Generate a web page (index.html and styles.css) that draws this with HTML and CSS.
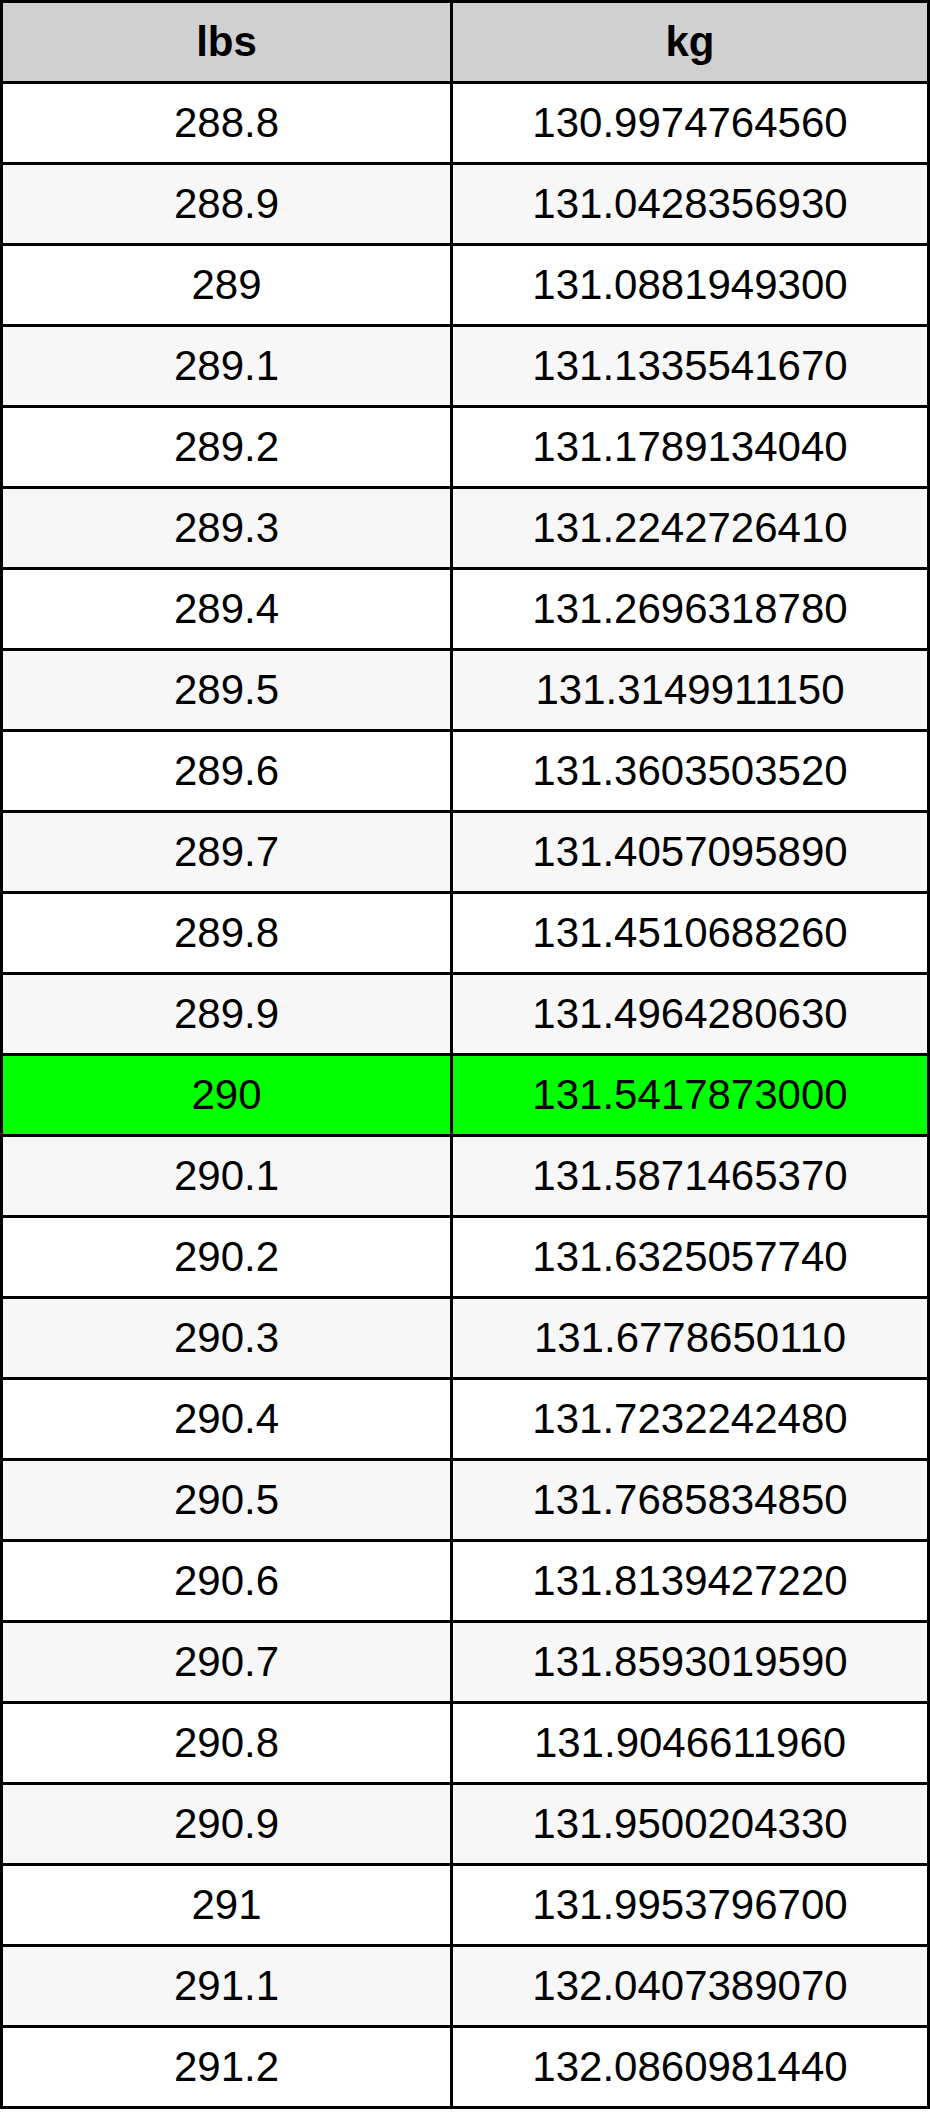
FILE: index.html
```html
<!DOCTYPE html>
<html>
<head>
<meta charset="utf-8">
<link rel="stylesheet" href="styles.css">
</head>
<body>
<table class="conv">
<colgroup><col class="c1"><col class="c2"></colgroup>
<thead>
<tr><th>lbs</th><th>kg</th></tr>
</thead>
<tbody>
<tr><td>288.8</td><td>130.9974764560</td></tr>
<tr><td>288.9</td><td>131.0428356930</td></tr>
<tr><td>289</td><td>131.0881949300</td></tr>
<tr><td>289.1</td><td>131.1335541670</td></tr>
<tr><td>289.2</td><td>131.1789134040</td></tr>
<tr><td>289.3</td><td>131.2242726410</td></tr>
<tr><td>289.4</td><td>131.2696318780</td></tr>
<tr><td>289.5</td><td>131.3149911150</td></tr>
<tr><td>289.6</td><td>131.3603503520</td></tr>
<tr><td>289.7</td><td>131.4057095890</td></tr>
<tr><td>289.8</td><td>131.4510688260</td></tr>
<tr><td>289.9</td><td>131.4964280630</td></tr>
<tr class="hl"><td>290</td><td>131.5417873000</td></tr>
<tr><td>290.1</td><td>131.5871465370</td></tr>
<tr><td>290.2</td><td>131.6325057740</td></tr>
<tr><td>290.3</td><td>131.6778650110</td></tr>
<tr><td>290.4</td><td>131.7232242480</td></tr>
<tr><td>290.5</td><td>131.7685834850</td></tr>
<tr><td>290.6</td><td>131.8139427220</td></tr>
<tr><td>290.7</td><td>131.8593019590</td></tr>
<tr><td>290.8</td><td>131.9046611960</td></tr>
<tr><td>290.9</td><td>131.9500204330</td></tr>
<tr><td>291</td><td>131.9953796700</td></tr>
<tr><td>291.1</td><td>132.0407389070</td></tr>
<tr><td>291.2</td><td>132.0860981440</td></tr>
</tbody>
</table>
</body>
</html>
```

FILE: styles.css
```css
html, body {
  margin: 0;
  padding: 0;
  background: #ffffff;
}

.conv {
  width: 930px;
  table-layout: fixed;
  border-collapse: separate;
  border-spacing: 0;
  border-right: 3px solid #000;
  border-bottom: 3px solid #000;
  font-family: "Liberation Sans", Arial, sans-serif;
  font-size: 42px;
  color: #000;
}

.conv .c1 { width: 450px; }
.conv .c2 { width: 477px; }

.conv th,
.conv td {
  border-left: 3px solid #000;
  border-top: 3px solid #000;
  padding: 0;
  line-height: 78px;
  height: 78px;
  text-align: center;
  vertical-align: middle;
  box-sizing: content-box;
}

.conv th {
  background: #d0d0d0;
  font-weight: bold;
}

.conv tbody tr:nth-child(even) td {
  background: #f7f7f7;
}

.conv tbody tr.hl td {
  background: #00ff00;
}
```
